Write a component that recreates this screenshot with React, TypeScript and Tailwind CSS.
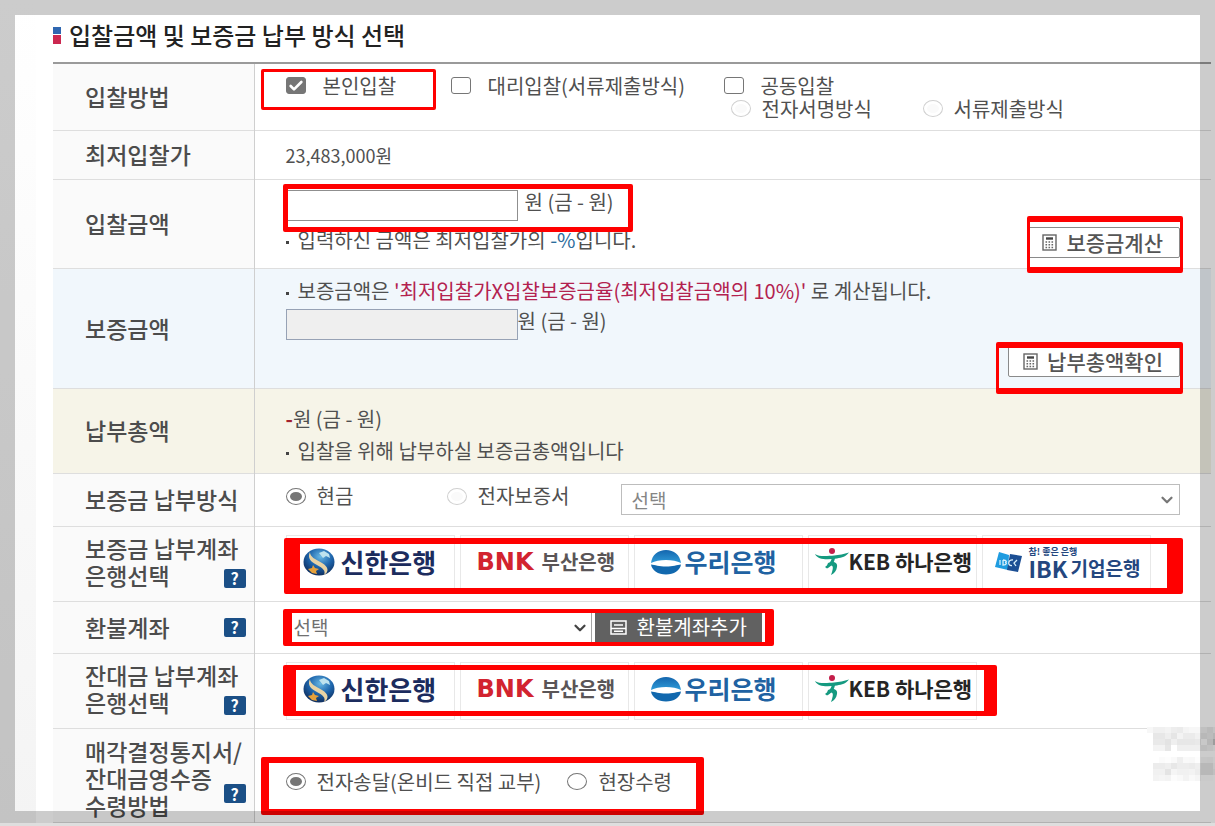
import type { ReactNode } from 'react';
import { Check, ChevronDown } from 'lucide-react';
import clsx from 'clsx';

const radioClass =
  'h-[17px] w-5 shrink-0 appearance-none rounded-[50%] border border-[#767676] bg-white bg-clip-content p-[3px] checked:bg-[#767676] disabled:border-[#d0d0d0] disabled:bg-[#fafafa]';

// mosaic over the corner, one number per 6px block (0 = white)
const mosaic = [
  [8, 15, 15, 12, 18, 20, 11, 8, 8, 14, 22, 12],
  [0, 24, 24, 17, 26, 12, 20, 20, 14, 24, 20, 30],
  [0, 22, 22, 28, 16, 24, 24, 24, 22, 4, 26, 60],
  [0, 12, 12, 25, 0, 16, 16, 16, 16, 20, 14, 8],
  [0, 0, 0, 0, 0, 0, 0, 0, 0, 0, 0, 0],
  [0, 0, 4, 2, 6, 16, 6, 7, 2, 8, 10, 3],
  [0, 19, 19, 16, 24, 18, 18, 20, 16, 24, 24, 8],
  [0, 14, 14, 27, 10, 14, 14, 12, 18, 24, 24, 14],
  [0, 12, 10, 12, 3, 6, 12, 6, 10, 2, 2, 0],
];

function Highlight({ className }: { className: string }) {
  return <div className={clsx('pointer-events-none absolute rounded-[2px] border-[#ff0000]', className)} />;
}

function HelpButton({ className }: { className?: string }) {
  return (
    <button
      aria-label="도움말"
      className={clsx(
        'col-start-1 row-start-1 flex h-[19px] w-[22px] items-center justify-center self-end justify-self-end rounded-[2px] bg-[#1b4f86] text-base font-bold leading-none text-white',
        className
      )}
    >
      ?
    </button>
  );
}

type RowProps = {
  lines: string[];
  height: string;
  tone?: string;
  cell?: string;
  head?: string;
  help?: string;
  children: ReactNode;
};

function Row({ lines, height, tone, cell, head, help, children }: RowProps) {
  return (
    <tr className={clsx('border-b border-[#dedede]', height, tone)}>
      <th
        scope="row"
        className={clsx(
          'border-r border-[#cfcfcf] pl-8 pr-2 text-left text-[23px] font-medium leading-[27px] text-[#4c4c4c]',
          !tone && 'bg-[#fafafa]',
          head
        )}
      >
        <div className="grid">
          <div className="col-start-1 row-start-1 whitespace-nowrap">
            {lines.map((line) => (
              <div key={line}>{line}</div>
            ))}
          </div>
          {help && <HelpButton className={help} />}
        </div>
      </th>
      <td className={clsx('px-[31px]', cell)}>{children}</td>
    </tr>
  );
}

function CheckOption({ label, checked }: { label: string; checked?: boolean }) {
  return (
    <label className="flex items-center gap-[17px]">
      <span className="relative flex">
        <input
          type="checkbox"
          defaultChecked={checked}
          className="peer h-[17px] w-5 appearance-none rounded-[3px] border border-[#767676] bg-white checked:bg-[#767676]"
        />
        <Check
          size={16}
          strokeWidth={4}
          className="pointer-events-none absolute left-[2px] top-px hidden text-white peer-checked:block"
        />
      </span>
      {label}
    </label>
  );
}

function RadioOption({ name, label, checked, disabled }: { name: string; label: string; checked?: boolean; disabled?: boolean }) {
  return (
    <label className="flex items-center gap-[11px]">
      <input type="radio" name={name} defaultChecked={checked} disabled={disabled} className={radioClass} />
      {label}
    </label>
  );
}

function Dot() {
  return <span className="mr-[9px] inline-block size-[3px] bg-[#444] align-middle" />;
}

function CalculatorIcon() {
  return (
    <svg width="15" height="17" viewBox="0 0 15 17" fill="none" stroke="#666">
      <rect x="1" y="1" width="13" height="15" strokeWidth="1.4" />
      <path d="M4 4.5h7" strokeWidth="2.4" stroke="#444" />
      <path d="M3.5 8h8M3.5 10.7h8M3.5 13.4h8" strokeWidth="1.5" strokeDasharray="1.6 1.4" />
    </svg>
  );
}

function CalcButton({ label }: { label: string }) {
  return (
    <button className="flex h-[31px] items-center gap-[9px] rounded-[2px] border border-[#8a8a8a] bg-white pl-[14px] pr-4 text-[21px] font-medium leading-none text-[#555]">
      <CalculatorIcon />
      {label}
    </button>
  );
}

function ShinhanLogo() {
  return (
    <>
      <svg width="32" height="28" viewBox="0 0 32 28">
        <defs>
          <radialGradient id="globe" cx="0.55" cy="0.3" r="0.75">
            <stop offset="0" stopColor="#69b8e4" />
            <stop offset="0.5" stopColor="#1d64ab" />
            <stop offset="1" stopColor="#0c2450" />
          </radialGradient>
        </defs>
        <ellipse cx="16" cy="14" rx="15.5" ry="13.5" fill="url(#globe)" />
        <path d="M7 4C4 10 8 14 14 17c6 3 9 6 7 10 5-3 5-8-2-12C12 11 7 9 7 4Z" fill="#e9d3a4" />
        <path d="M16 5l5-2 5 3 1 4-4-2-3 2Z" fill="#bfe3ee" />
        <path d="M5 21l4-1 1-3 2 3 4 1-3 2 1 3-5-1Z" fill="#e5a03a" />
      </svg>
      <span className="text-[26px] font-bold text-[#1c2c5e]">신한은행</span>
    </>
  );
}

function BusanLogo() {
  return (
    <>
      <span className="font-['DejaVu_Sans','Noto_Sans_CJK_KR',sans-serif] text-[24px] font-bold text-[#d2232f]">BNK</span>
      <span className="text-[20px] font-bold text-[#5a5557]">부산은행</span>
    </>
  );
}

function WooriLogo() {
  return (
    <>
      <svg width="30" height="26" viewBox="0 0 30 26">
        <defs>
          <linearGradient id="woori" x1="0" y1="0" x2="0" y2="1">
            <stop offset="0" stopColor="#1466ae" />
            <stop offset="1" stopColor="#2f9bd8" />
          </linearGradient>
        </defs>
        <path d="M0 14C1 6 7 1 15 1s14 5 15 13c-4-2-9-3-15-3S4 12 0 14Z" fill="url(#woori)" />
        <path d="M0 15.500c4 .5 8 2 15 2s11-1.500 15-2c-1 6-7 10-15 10S1 21.500 0 15.500Z" fill="#1168ae" />
      </svg>
      <span className="text-[25px] font-bold text-[#2062a2]">우리은행</span>
    </>
  );
}

function HanaLogo() {
  return (
    <>
      <svg width="34" height="27" viewBox="0 0 34 27">
        <circle cx="17" cy="3" r="3" fill="#c41e4a" />
        <path d="M0 6c4 3 13 2 19 1.500 5-.5 10-1.500 15-3-3 4-7 5-12 6C12 12 3 12 0 6Z" fill="#159a80" />
        <path d="M17 10c-1 4-4 7-7 9l2 1.500c4-2 7-5 8-10.500Z" fill="#159a80" />
        <path d="M13 15c5-2 10-1 9 4-.5 4-3 6.500-6 8 1.500-4 3-9 .5-9.500-1.500 0-3 .5-5 1.500Z" fill="#159a80" />
      </svg>
      <span className="text-[21px] font-bold text-[#252525]">KEB 하나은행</span>
    </>
  );
}

function IbkLogo() {
  return (
    <>
      <svg width="27" height="22" viewBox="0 0 27 22">
        <path d="M4 1l10 3-1 15L0 16Z" fill="#1f9ce0" />
        <path d="M15 3l12 2-4 16-11-2Z" fill="#1c4f94" />
        <path d="M5 9v5M8 9v5c4 0 4-2.500 2-2.500 2 0 2-2.500-2-2.500M18 9c-5-1-6 6-1 5.500M22 9l-3 3 2 3" fill="none" stroke="#d9f0fb" strokeWidth="1.3" />
      </svg>
      <span className="ml-[7px] flex flex-col items-start gap-[3px] text-[#24477f]">
        <span className="text-[9px] font-bold leading-[9px]">참! 좋은 은행</span>
        <span className="flex items-center gap-[3px] leading-[18px]">
          <span className="text-[23px] font-bold">IBK</span>
          <span className="text-[19px] font-bold">기업은행</span>
        </span>
      </span>
    </>
  );
}

const banks = [
  { id: 'shinhan', logo: <ShinhanLogo />, layout: 'gap-[6px] pl-4' },
  { id: 'busan', logo: <BusanLogo />, layout: 'gap-2 pl-4' },
  { id: 'woori', logo: <WooriLogo />, layout: 'gap-1 pl-4' },
  { id: 'hana', logo: <HanaLogo />, layout: 'pl-[6px]' },
  { id: 'ibk', logo: <IbkLogo />, layout: 'pl-3' },
];

function BankList({ count }: { count: number }) {
  return (
    <div className="flex gap-[5px]">
      {banks.slice(0, count).map((bank) => (
        <button
          key={bank.id}
          className={clsx(
            'flex h-[58px] w-[169px] items-center whitespace-nowrap border border-[#e8e8e8] bg-white pb-1 leading-none',
            bank.layout
          )}
        >
          {bank.logo}
        </button>
      ))}
    </div>
  );
}

export default function App() {
  return (
    <div className="relative min-h-screen overflow-hidden border-b-[3px] border-[#dedede] bg-white font-['Noto_Sans_CJK_KR',sans-serif] text-[20px] leading-6 text-[#505050]">
      <div className="flex">
        <div className="w-9 shrink-0 bg-linear-to-b from-white to-[#f4f4f4]" />
        <main className="min-w-0 flex-1 pl-[17px] pr-1">
          <h1 className="flex items-center gap-2 pb-[14px] pt-[22px] text-[24px] font-medium leading-[26px] text-[#222]">
            <span className="flex flex-col gap-px">
              <span className="h-[7px] w-2 bg-[#2f67b1]" />
              <span className="h-[9px] w-2 bg-[#cb2850]" />
            </span>
            입찰금액 및 보증금 납부 방식 선택
          </h1>
          <table className="w-full table-fixed border-collapse border-t-2 border-[#9a9a9a]">
            <colgroup>
              <col className="w-[201px]" />
              <col />
            </colgroup>
            <tbody>
              <Row lines={['입찰방법']} height="h-[67px]">
                <div className="relative grid grid-cols-[165px_273px_1fr] leading-[23px]">
                  <div>
                    <CheckOption label="본인입찰" checked />
                  </div>
                  <div>
                    <CheckOption label="대리입찰(서류제출방식)" />
                  </div>
                  <div>
                    <CheckOption label="공동입찰" />
                    <div className="flex pl-[7px]">
                      <div className="w-48">
                        <RadioOption name="joint" label="전자서명방식" disabled />
                      </div>
                      <RadioOption name="joint" label="서류제출방식" disabled />
                    </div>
                  </div>
                  <Highlight className="-left-[25px] -top-[5px] h-[41px] w-[175px] border-[3px]" />
                </div>
              </Row>

              <Row lines={['최저입찰가']} height="h-[49px]">
                <span className="text-lg">23,483,000원</span>
              </Row>

              <Row lines={['입찰금액']} height="h-[89px]">
                <div className="relative flex justify-between pb-[6px]">
                  <div>
                    <div className="flex gap-[7px]">
                      <input aria-label="입찰금액" className="h-[31px] w-[232px] border border-[#8f8f8f] bg-white px-2" />
                      <span>원 (금 - 원)</span>
                    </div>
                    <p className="mt-[7px]">
                      <Dot />
                      입력하신 금액은 최저입찰가의 <span className="text-[#2c6c9c]">-%</span>입니다.
                    </p>
                  </div>
                  <div className="relative -mb-[6px] self-end">
                    <CalcButton label="보증금계산" />
                    <Highlight className="-bottom-[15px] -right-[3px] -top-[11px] left-0 border-x-[3px] border-y-[6px]" />
                  </div>
                  <Highlight className="-left-[3px] -top-[6px] h-12 w-[350px] border-[5px]" />
                </div>
              </Row>

              <Row lines={['보증금액']} height="h-[120px]" tone="bg-[#f1f7fc]">
                <p>
                  <Dot />
                  보증금액은 <span className="text-[#b3224f]">'최저입찰가X입찰보증금율(최저입찰금액의 10%)'</span> 로 계산됩니다.
                </p>
                <div className="mt-[6px] flex">
                  <input aria-label="보증금액" readOnly className="h-[31px] w-[232px] border border-[#97a2b5] bg-[#efefef] px-2" />
                  <span>원 (금 - 원)</span>
                </div>
                <div className="relative ml-auto mt-[6px] w-fit">
                  <CalcButton label="납부총액확인" />
                  <Highlight className="-bottom-[17px] -left-3 -right-[3px] -top-1 border-x-[3px] border-y-[6px]" />
                </div>
              </Row>

              <Row lines={['납부총액']} height="h-[85px]" tone="bg-[#f6f4e8]" cell="pt-2 leading-8">
                <p>
                  <strong className="text-[#a3202e]">-</strong>원 (금 - 원)
                </p>
                <p>
                  <Dot />
                  입찰을 위해 납부하실 보증금총액입니다
                </p>
              </Row>

              <Row lines={['보증금 납부방식']} height="h-[53px]">
                <div className="flex">
                  <div className="w-[161px]">
                    <RadioOption name="pay" label="현금" checked />
                  </div>
                  <div className="w-[174px]">
                    <RadioOption name="pay" label="전자보증서" disabled />
                  </div>
                  <div className="relative flex-1">
                    <select
                      aria-label="전자보증서 선택"
                      className="h-[31px] w-full appearance-none border border-[#bdbdbd] bg-white pl-[10px] text-[19px] leading-6 text-[#858585]"
                    >
                      <option>선택</option>
                    </select>
                    <ChevronDown size={18} strokeWidth={3} className="pointer-events-none absolute right-1 top-[7px] text-[#777]" />
                  </div>
                </div>
              </Row>

              <Row lines={['보증금 납부계좌', '은행선택']} height="h-[75px]" head="pb-1" help="mb-px">
                <div className="relative">
                  <BankList count={5} />
                  <Highlight className="-left-[2px] top-[3px] h-14 w-[899px] border-x-[16px] border-y-[6px]" />
                </div>
              </Row>

              <Row lines={['환불계좌']} height="h-[52px]" help="mb-1">
                <div className="relative flex gap-[3px]">
                  <div className="relative w-[306px]">
                    <select
                      aria-label="환불계좌"
                      className="h-[31px] w-full appearance-none border border-[#a5a5a5] bg-white pl-[7px] text-[19px] leading-6 text-[#707070]"
                    >
                      <option>선택</option>
                    </select>
                    <ChevronDown size={18} strokeWidth={3} className="pointer-events-none absolute right-[3px] top-[7px] text-[#444]" />
                  </div>
                  <button className="flex h-[31px] items-center gap-[10px] bg-[#616161] px-[15px] leading-none text-white">
                    <svg width="17" height="15" viewBox="0 0 17 15" fill="none" stroke="#fff" strokeWidth="1.5">
                      <path d="M1 1h15v13H1ZM1 8.500h15M4 5h9M4 11.300h9" />
                    </svg>
                    환불계좌추가
                  </button>
                  <Highlight className="-left-[3px] -top-[3px] h-[37px] w-[491px] border-x-[9px] border-y-4" />
                </div>
              </Row>

              <Row lines={['잔대금 납부계좌', '은행선택']} height="h-[75px]" head="pb-1" help="mb-px">
                <div className="relative">
                  <BankList count={4} />
                  <Highlight className="-left-[3px] top-[3px] h-[51px] w-[714px] border-x-[13px] border-y-[5px]" />
                </div>
              </Row>

              <Row
                lines={['매각결정통지서/', '잔대금영수증', '수령방법']}
                height="h-[94px]"
                head="pt-[7px]"
                cell="pt-[13px]"
                help="mb-4"
              >
                <div className="relative flex gap-[26px]">
                  <RadioOption name="receipt" label="전자송달(온비드 직접 교부)" checked />
                  <RadioOption name="receipt" label="현장수령" />
                  <Highlight className="-left-[25px] -top-[13px] h-[58px] w-[443px] border-x-[8px] border-y-[6px]" />
                </div>
              </Row>
            </tbody>
          </table>
        </main>
      </div>

      <svg aria-hidden="true" width="72" height="54" className="pointer-events-none absolute -right-1 top-[727px]">
        {mosaic.map((row, y) =>
          row.map((shade, x) => (
            <rect key={`${x}-${y}`} x={x * 6} y={y * 6} width="6" height="6" fill={`rgb(${255 - shade},${255 - shade},${255 - shade})`} />
          ))
        )}
      </svg>

      {/* translucent frame over the whole page */}
      <div className="pointer-events-none absolute -bottom-[3px] left-0 right-0 top-0 border-[15px] border-black/20" />
    </div>
  );
}
